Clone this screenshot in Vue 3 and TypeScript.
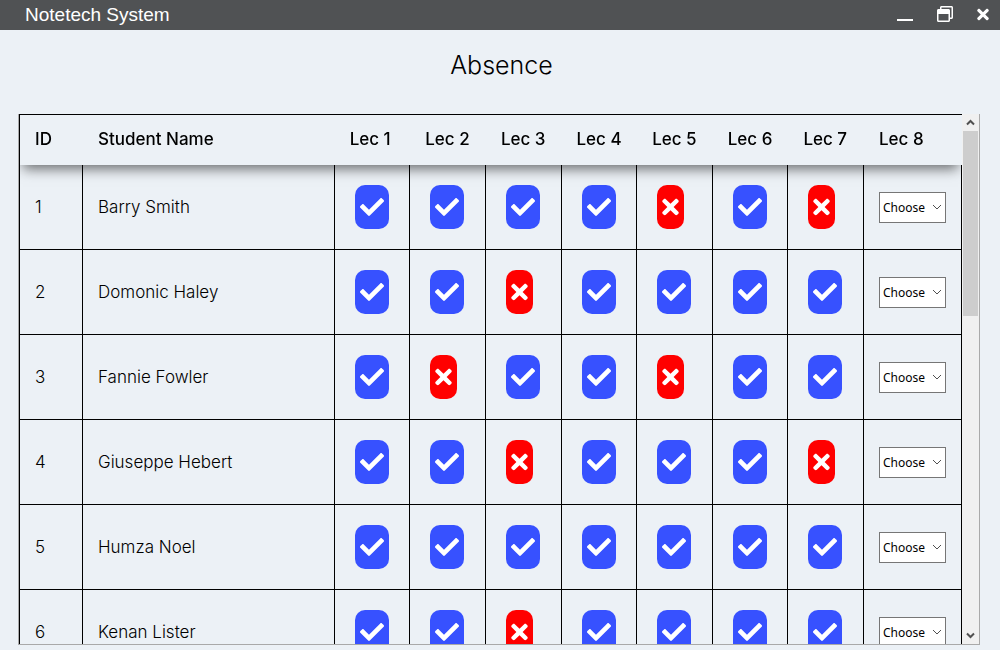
<script setup lang="ts">
import { ref } from 'vue'

interface Student {
  id: number
  name: string
  attended: boolean[]
}

const lectures = [1, 2, 3, 4, 5, 6, 7, 8]

function marks(absences: number[]): boolean[] {
  return [1, 2, 3, 4, 5, 6, 7].map((lecture) => !absences.includes(lecture))
}

const students: Student[] = [
  { id: 1, name: 'Barry Smith', attended: marks([5, 7]) },
  { id: 2, name: 'Domonic Haley', attended: marks([3]) },
  { id: 3, name: 'Fannie Fowler', attended: marks([2, 5]) },
  { id: 4, name: 'Giuseppe Hebert', attended: marks([3, 7]) },
  { id: 5, name: 'Humza Noel', attended: marks([]) },
  { id: 6, name: 'Kenan Lister', attended: marks([3]) },
]

const viewport = ref<HTMLElement | null>(null)

function scrollRows(distance: number) {
  viewport.value?.scrollBy({ top: distance })
}
</script>

<template>
  <div class="window">
    <header class="titlebar">
      <span class="app-name">Notetech System</span>
      <div class="window-buttons">
        <button type="button" aria-label="Minimize">
          <svg width="16" height="16" viewBox="0 0 16 16"><rect y="13" width="16" height="2" /></svg>
        </button>
        <button type="button" aria-label="Restore">
          <svg width="16" height="16" viewBox="0 0 512 512"><path d="M464 0H144c-26.5 0-48 21.5-48 48v48H48c-26.5 0-48 21.5-48 48v320c0 26.5 21.5 48 48 48h320c26.5 0 48-21.5 48-48v-48h48c26.5 0 48-21.5 48-48V48c0-26.5-21.5-48-48-48zm-96 464H48V256h320v208zm96-96h-48V144c0-26.5-21.5-48-48-48H144V48h320v320z" /></svg>
        </button>
        <button type="button" aria-label="Close">
          <svg width="12" height="17" viewBox="0 0 352 512"><path d="M242.72 256l100.07-100.07c12.28-12.28 12.28-32.19 0-44.48l-22.24-22.24c-12.28-12.28-32.19-12.28-44.48 0L176 189.28 75.93 89.21c-12.28-12.28-32.19-12.28-44.48 0L9.21 111.45c-12.28 12.28-12.28 32.19 0 44.48L109.28 256 9.21 356.07c-12.28 12.28-12.28 32.19 0 44.48l22.24 22.24c12.28 12.28 32.2 12.28 44.48 0L176 322.72l100.07 100.07c12.28 12.28 32.2 12.28 44.48 0l22.24-22.24c12.28-12.28 12.28-32.19 0-44.48L242.72 256z" /></svg>
        </button>
      </div>
    </header>

    <h1>Absence</h1>

    <main class="panel">
      <div ref="viewport" class="viewport">
        <table>
          <colgroup>
            <col class="col-id" />
            <col />
            <col v-for="n in 7" :key="n" class="col-lecture" />
            <col class="col-choice" />
          </colgroup>
          <thead>
            <tr>
              <th scope="col">ID</th>
              <th scope="col">Student Name</th>
              <th v-for="lecture in lectures" :key="lecture" scope="col">Lec {{ lecture }}</th>
            </tr>
          </thead>
          <tbody>
            <tr v-for="student in students" :key="student.id">
              <td>{{ student.id }}</td>
              <td>{{ student.name }}</td>
              <td v-for="(present, index) in student.attended" :key="index">
                <span v-if="present" class="badge present" role="img" aria-label="Present">
                  <svg width="24" height="24" viewBox="0 0 512 512"><path d="M173.898 439.404l-166.4-166.4c-9.997-9.997-9.997-26.206 0-36.204l36.203-36.204c9.997-9.998 26.207-9.998 36.204 0L192 312.69 432.095 72.596c9.997-9.997 26.207-9.997 36.204 0l36.203 36.204c9.997 9.997 9.997 26.206 0 36.204l-294.4 294.401c-9.998 9.997-26.207 9.997-36.204-.001z" /></svg>
                </span>
                <span v-else class="badge absent" role="img" aria-label="Absent">
                  <svg width="17" height="24" viewBox="0 0 352 512"><path d="M242.72 256l100.07-100.07c12.28-12.28 12.28-32.19 0-44.48l-22.24-22.24c-12.28-12.28-32.19-12.28-44.48 0L176 189.28 75.93 89.21c-12.28-12.28-32.19-12.28-44.48 0L9.21 111.45c-12.28 12.28-12.28 32.19 0 44.48L109.28 256 9.21 356.07c-12.28 12.28-12.28 32.19 0 44.48l22.24 22.24c12.28 12.28 32.2 12.28 44.48 0L176 322.72l100.07 100.07c12.28 12.28 32.2 12.28 44.48 0l22.24-22.24c12.28-12.28 12.28-32.19 0-44.48L242.72 256z" /></svg>
                </span>
              </td>
              <td>
                <div class="choice">
                  <select :aria-label="`Lec 8, ${student.name}`">
                    <option>Choose</option>
                  </select>
                  <svg width="10" height="6" viewBox="0 0 10 6"><path d="M1 1l4 4 4-4" /></svg>
                </div>
              </td>
            </tr>
          </tbody>
        </table>
      </div>
      <div class="scrollbar">
        <button type="button" aria-label="Scroll up" @click="scrollRows(-85)">
          <svg width="9" height="7" viewBox="0 0 9 7"><path d="M1 5.5l3.500-3.500 3.500 3.500" /></svg>
        </button>
        <div class="track"><div class="thumb"></div></div>
        <button type="button" aria-label="Scroll down" @click="scrollRows(85)">
          <svg width="9" height="7" viewBox="0 0 9 7"><path d="M1 1.500l3.500 3.500 3.500-3.500" /></svg>
        </button>
      </div>
    </main>
  </div>
</template>

<style>
body {
  margin: 0;
  background: #ecf1f6;
}
</style>

<style scoped>
.window {
  display: flex;
  flex-direction: column;
  box-sizing: border-box;
  height: 100vh;
  padding-bottom: 5px;
  background: #ecf1f6;
  color: #000;
  font-family: Inter, "Open Sans", sans-serif;
}

button {
  display: flex;
  align-items: center;
  justify-content: center;
  padding: 0;
  border: 0;
  background: none;
}

.titlebar {
  display: flex;
  flex: none;
  align-items: center;
  justify-content: space-between;
  height: 30px;
  padding: 0 11px 0 25px;
  background: #505254;
  color: #fff;
}

.app-name {
  font: 19px/30px "Liberation Sans", Arial, sans-serif;
}

.window-buttons {
  display: flex;
  gap: 24px;
  padding-bottom: 2px;
}

.window-buttons svg,
.badge svg {
  display: block;
  fill: #fff;
}

h1 {
  flex: none;
  margin: 20px 0 34px;
  padding-left: 3px;
  font-size: 25px;
  font-weight: 300;
  line-height: 30px;
  text-align: center;
}

.panel {
  display: flex;
  flex: 1;
  min-height: 0;
  margin: 0 20px 0 18px;
  border: 1px solid #a9a9a9;
  border-top: 0;
}

.viewport {
  flex: 1;
  min-width: 0;
  overflow-y: auto;
  scrollbar-width: none;
}

table {
  width: 100%;
  table-layout: fixed;
  border-spacing: 0;
  font-size: 17px;
  line-height: 20px;
}

.col-id {
  width: 64px;
}

.col-lecture {
  width: 8.02%;
}

.col-choice {
  width: 98px;
}

thead {
  position: sticky;
  top: 0;
  z-index: 1;
  background: #ecf1f6;
  box-shadow: 0 8px 12px -4px rgba(0, 0, 0, 0.55);
}

th,
td {
  box-sizing: border-box;
  padding: 0 0 0 15px;
  text-align: left;
  white-space: nowrap;
}

th {
  height: 51px;
  padding-bottom: 2px;
  border-top: 1px solid #000;
  font-weight: 500;
}

td {
  height: 85px;
  border-right: 1px solid #000;
  border-bottom: 1px solid #000;
  font-weight: 300;
}

th:first-child,
td:first-child {
  border-left: 1px solid #000;
}

.badge {
  display: block;
  width: fit-content;
  margin-left: 5px;
  padding: 10px 5px;
  border-radius: 10px;
}

.present {
  background: #3751ff;
}

.absent {
  background: #f00;
}

.choice {
  display: grid;
  align-items: center;
  width: 67px;
}

.choice select {
  grid-area: 1 / 1;
  width: 100%;
  height: 31px;
  padding: 0 3px;
  appearance: none;
  border: 1px solid #767676;
  border-radius: 0;
  background: #fff;
  color: #000;
  font: 12px "Noto Sans", sans-serif;
}

.choice svg {
  grid-area: 1 / 1;
  justify-self: end;
  margin-right: 4px;
  fill: none;
  stroke: #505050;
  pointer-events: none;
}

.scrollbar {
  display: flex;
  flex: none;
  flex-direction: column;
  width: 17px;
  background: #f0f0f0;
}

.scrollbar button {
  height: 17px;
}

.scrollbar svg {
  fill: none;
  stroke: #505050;
  stroke-width: 2;
}

.track {
  flex: 1;
  padding: 0 1px;
}

.thumb {
  height: 37.2%;
  background: #cdcdcd;
}
</style>
